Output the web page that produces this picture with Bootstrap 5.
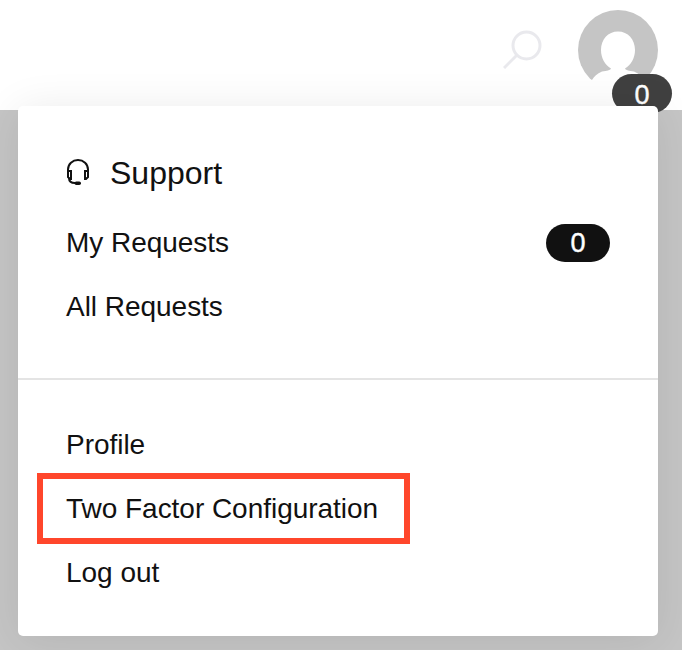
<!DOCTYPE html>
<html lang="en">
<head>
<meta charset="utf-8">
<title>Account menu</title>
<link href="https://cdn.jsdelivr.net/npm/bootstrap@5.3.0/dist/css/bootstrap.min.css" rel="stylesheet">
<style>
body{background:#c5c5c5;font-family:"Liberation Sans",Arial,sans-serif;color:#111;font-size:28px;height:650px;overflow:hidden}
.topbar{height:110px;padding:10px 24px 0 0}
.search-icon{margin:19px 35px 0 0}
.avatar{width:80px;height:80px}
.count{width:64px;height:38px;background:#111;font-size:27px;font-weight:400;line-height:38px;padding:0;-webkit-text-stroke:.4px #fff}
.avatar-count{left:34px;top:64px;width:60px;height:39px;background:#404040;line-height:42px}
.account-menu{margin:-4px 24px 0 18px;height:530px;border-radius:5px;z-index:2;box-shadow:0 4px 44px rgba(0,0,0,.09)}
.support-group{height:274px;padding:29px 48px 0;border-bottom:2px solid #e4e4e4}
.account-group{padding:33px 48px 0}
.menu-heading{height:76px;font-size:32px;font-weight:400;line-height:76px}
.menu-row{height:64px;line-height:64px;color:inherit;letter-spacing:-.03px}
.highlighted{height:71px;margin:-4px 0 -3px -29px;width:373px;padding-left:23px;line-height:59px;border:6px solid #ff462b}
.headset{margin:-2px 16px 0 0}
</style>
<script src="https://cdn.jsdelivr.net/npm/bootstrap@5.3.0/dist/js/bootstrap.bundle.min.js"></script>
</head>
<body>
<header class="topbar bg-white d-flex justify-content-end align-items-start">
  <svg class="search-icon" width="40" height="40" fill="none" stroke="#e9e9ed" stroke-width="3"><circle cx="23.5" cy="16.5" r="13.5"/><path d="M14 26 1 39"/></svg>
  <div class="avatar position-relative">
    <svg class="d-block" width="80" height="80">
      <circle cx="40" cy="40" r="40" fill="#c5c5c5"/>
      <path fill="#fff" d="M40 21.500c-10 0-17 8-17 18.500 0 8 4 15 10 18.500-1 2-4 2-9 3-5 2-8 5-10 8.500L10 72V80H70V72l-4-2c-2-3.500-5-6.500-10-8.500-5-1-8-1-9-3 6-3.500 10-10.500 10-18.500 0-10.500-7-18.500-17-18.500z"/>
    </svg>
    <span class="avatar-count count badge rounded-pill position-absolute">0</span>
  </div>
</header>
<main class="account-menu bg-white position-relative">
  <section class="support-group">
    <h2 class="menu-heading d-flex align-items-center m-0">
      <svg class="headset" width="28" height="28" fill="none" stroke="#111" stroke-width="2"><path d="M2 14v-2.500C2 6 6.500 2 12 2s10 4 10 9.500V14"/><path d="M2 13h3v8H4l-2-2zM22 13h-3v8h1l2-2z"/><path d="M3 20c0 3.500 2 5 6 5"/><rect x="8.500" y="23.500" width="6.500" height="3.500" rx="1.750" fill="#111" stroke="none"/></svg><span>Support</span>
    </h2>
    <a class="menu-row d-flex align-items-center justify-content-between text-decoration-none" href="#">My Requests<span class="count badge rounded-pill">0</span></a>
    <a class="menu-row d-block text-decoration-none" href="#">All Requests</a>
  </section>
  <nav class="account-group">
    <a class="menu-row d-block text-decoration-none" href="#">Profile</a>
    <a class="menu-row highlighted d-block text-decoration-none" href="#">Two Factor Configuration</a>
    <a class="menu-row d-block text-decoration-none" href="#">Log out</a>
  </nav>
</main>
</body>
</html>
